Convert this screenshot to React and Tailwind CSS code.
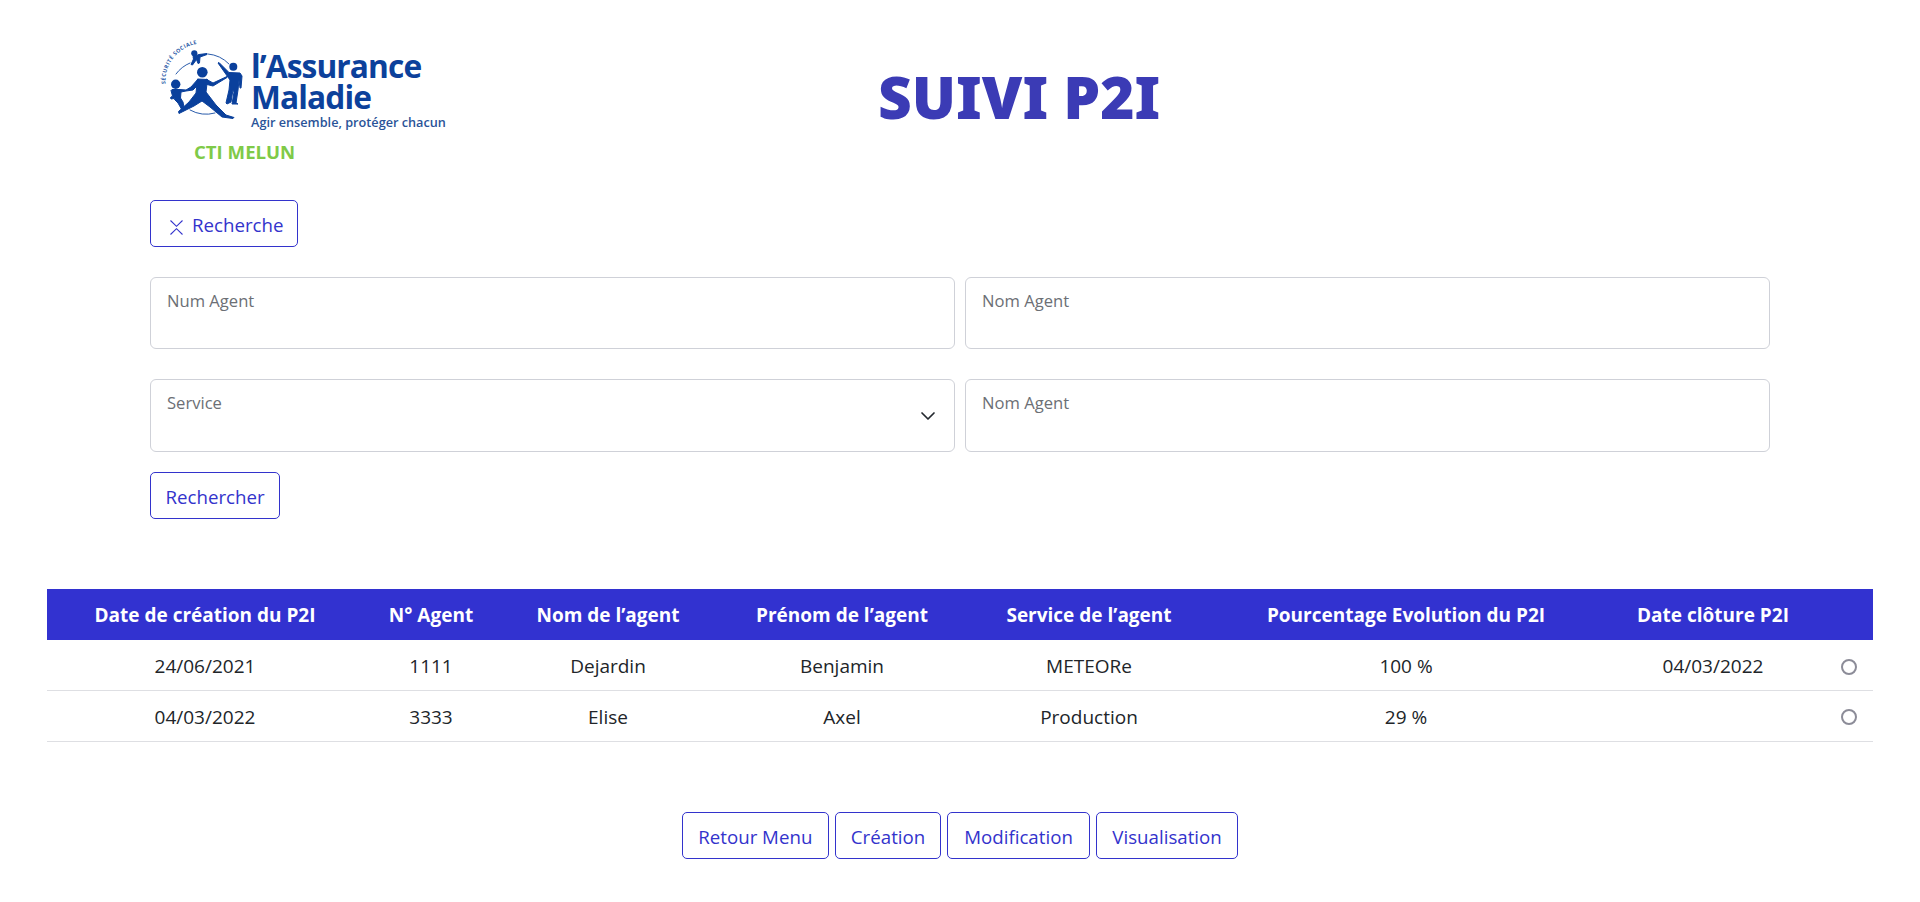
import React from "react";
import { ChevronDown } from "lucide-react";

const font = { fontFamily: '"Open Sans", sans-serif' };

function Logo() {
  return (
    <div className="flex flex-col w-[310px]">
      <div className="flex items-start">
        <svg width="100" height="100" viewBox="0 0 100 100" className="shrink-0">
          <defs>
            <path id="arc" d="M15.5 54 A38 38 0 0 1 56 13.5" fill="none" />
          </defs>
          <text fontSize="5.4" fontWeight="700" fill="#2f5da8" fontFamily='"Open Sans", sans-serif' letterSpacing="0.45">
            <textPath href="#arc">SÉCURITÉ SOCIALE</textPath>
          </text>
          <g fill="none" stroke="#2a5cab" strokeWidth="1" strokeLinecap="round">
            <path d="M26 44 A33 33 0 0 1 40 33" />
            <path d="M58 24 A33 33 0 0 1 79 34" />
            <path d="M40 80 A33 33 0 0 0 65 83" />
          </g>
          <g fill="#0a409c" stroke="#0a409c" strokeWidth="1" strokeLinejoin="round">
            <circle cx="52.3" cy="42.3" r="5.3" stroke="none" />
            <path d="M47.5 49 L57.5 49.5 L56 62 L66 75 L76 85 L84 87.5 L83 88.5 L72 87 L60 77 L52 71 L44 76 L29 83.5 L28.5 81.5 L39 72 L46 63 Z" />
            <path d="M56 49 L63 53 L77 46.5 L77 47.5 L63 56 L55 54 Z" />
            <path d="M48 49 L51 52 L43 60 L36 61 L36 60 L41 57 Z" />
            <circle cx="25.7" cy="54.3" r="4.7" stroke="none" />
            <path d="M22 59.5 L30 59.5 L36 60 L36 61 L31 62 L30.5 68 L33 72 L34.5 80 L32 80 L28 73 L25 70 L24 68.5 L21 69 L20.5 67.5 L22.5 66 L21 60.5 Z" />
            <circle cx="83.3" cy="36.7" r="4" stroke="none" />
            <path d="M79 42.5 L90 43 L92 46 L91 58 L90 58 L89 50 L88 60 L86 73 L88 74 L82 74 L84 62 L83 60 L81 72 L77 74 L76 73 L79 60 L80 50 L68 33 L69 32.5 Z" />
            <circle cx="44.3" cy="23.3" r="3.1" stroke="none" />
            <path d="M43 26.5 L49 24.5 L57 23.5 L57 24.5 L50 27 L49.5 33 L48 33.5 L46.5 29.5 L42.5 35 L41 34.5 L43.5 29 Z" />
          </g>
        </svg>
        <div className="flex flex-col text-[#0c419b] ml-[1px] pt-[20px]">
          <div className="text-[31.7px] leading-[31px] font-bold tracking-[-0.9px] whitespace-nowrap">l’Assurance</div>
          <div className="text-[31.7px] leading-[31px] font-bold tracking-[-0.9px] whitespace-nowrap">Maladie</div>
          <div className="text-[12.7px] leading-[14px] font-semibold text-[#2a5398] whitespace-nowrap mt-[3px]">Agir ensemble, protéger chacun</div>
        </div>
      </div>
      <div className="text-[18.6px] leading-[24px] font-bold text-[#7fca48] ml-[44px] mt-[10px]">CTI MELUN</div>
    </div>
  );
}

function Btn({ children, className = "px-[15px]" }) {
  return (
    <button className={"h-[47px] border border-[#3333cc] rounded-[5px] bg-white text-[#3333cc] text-[18.7px] pt-[4px] flex items-center whitespace-nowrap " + className}>
      {children}
    </button>
  );
}

function Field({ label, select, className }) {
  return (
    <div className={"relative flex-1 border border-[#cfd1d8] rounded-[6px] bg-white px-[16px] pt-[11px] text-[16.6px] leading-[24px] text-[#6c6f75] " + className}>
      {label}
      {select && <ChevronDown size={24} strokeWidth={1.7} className="absolute right-[14px] top-[24px] text-[#24292f]" />}
    </div>
  );
}

const rows = [
  ["24/06/2021", "1111", "Dejardin", "Benjamin", "METEORe", "100 %", "04/03/2022"],
  ["04/03/2022", "3333", "Elise", "Axel", "Production", "29 %", ""],
];
const heads = [
  "Date de création du P2I",
  "N° Agent",
  "Nom de l’agent",
  "Prénom de l’agent",
  "Service de l’agent",
  "Pourcentage Evolution du P2I",
  "Date clôture P2I",
];

export default function App() {
  return (
    <div style={font} className="bg-white w-full h-[902px] overflow-hidden">
      <div className="flex items-start pl-[150px] pt-[30px]">
        <Logo />
        <h1 style={{ fontFamily: '"Noto Sans", sans-serif' }} className="text-[58.5px] leading-[80px] font-black text-[#3b3bb5] ml-[418px] mt-[26px] whitespace-nowrap">SUIVI P2I</h1>
      </div>

      <div className="px-[150px] mt-[36px]">
        <Btn className="pl-[19px] pr-[14px]">
          <svg width="13" height="15" viewBox="0 0 13 15" fill="none" stroke="currentColor" strokeWidth="1.1" className="mt-[3px] mr-[9px]">
            <path d="M0.5 0.5 L6.5 6.3 L12.5 0.5 M0.5 14.5 L6.5 8.7 L12.5 14.5" />
          </svg>
          Recherche
        </Btn>
        <div className="flex gap-[10px] mt-[30px]">
          <Field label="Num Agent" className="h-[72px]" />
          <Field label="Nom Agent" className="h-[72px]" />
        </div>
        <div className="flex gap-[10px] mt-[30px]">
          <Field label="Service" select className="h-[73px]" />
          <Field label="Nom Agent" className="h-[73px]" />
        </div>
        <Btn className="mt-[20px] px-[14.5px]">Rechercher</Btn>
      </div>

      <div className="px-[47px] mt-[70px]">
        <table className="w-full table-fixed border-collapse text-center text-[19px]">
          <colgroup>
            <col className="w-[316px]" />
            <col className="w-[136px]" />
            <col className="w-[218px]" />
            <col className="w-[250px]" />
            <col className="w-[244px]" />
            <col className="w-[390px]" />
            <col className="w-[224px]" />
            <col className="w-[48px]" />
          </colgroup>
          <thead>
            <tr className="h-[51px] bg-[#3232d0] text-white">
              {heads.map((h) => (
                <th key={h} className="font-bold pt-[2px]">{h}</th>
              ))}
              <th />
            </tr>
          </thead>
          <tbody>
            {rows.map((r) => (
              <tr key={r[0]} className="h-[50.5px] border-b border-[#dedfe3] text-[#212529]">
                {r.map((c, i) => (
                  <td key={i} className="pt-[2px]">{c}</td>
                ))}
                <td className="pt-[3px]">
                  <span className="block w-[16px] h-[16px] mx-auto rounded-full border-2 border-[#8c8c98]" />
                </td>
              </tr>
            ))}
          </tbody>
        </table>
      </div>

      <div className="flex justify-center gap-[6px] mt-[70px]">
        <Btn className="px-[15.5px]">Retour Menu</Btn>
        <Btn className="px-[15px]">Création</Btn>
        <Btn className="px-[16px]">Modification</Btn>
        <Btn className="px-[15.5px]">Visualisation</Btn>
      </div>
    </div>
  );
}
